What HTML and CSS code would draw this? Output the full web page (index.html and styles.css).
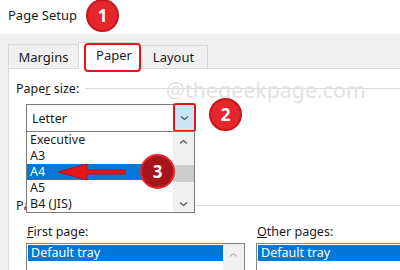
FILE: index.html
```html
<!DOCTYPE html>
<html lang="en">

<head>
  <meta charset="UTF-8">
  <title>Page Setup</title>
  <link rel="stylesheet" href="styles.css">
</head>

<body>
  <div class="window">
    <div class="titlebar">Page Setup</div>
    <div class="dialog">
      <div class="tabs">
        <div class="tab tab-margins">Margins</div>
        <div class="tab tab-paper active">Paper</div>
        <div class="tab tab-layout">Layout</div>
      </div>
      <div class="panel">
        <div class="legend">
          <span>Pape<u>r</u> size:</span>
          <div class="rule"></div>
        </div>
        <div class="combo">
          <div class="combo-value">Letter</div>
          <div class="combo-btn">
            <svg width="9" height="6" viewBox="0 0 9 6"><path d="M1 1.5 L4.5 4.5 L8 1.5" fill="none" stroke="#555" stroke-width="1.3"/></svg>
          </div>
          <div class="dropdown">
            <div class="items">
              <div class="item">Executive</div>
              <div class="item">A3</div>
              <div class="item selected">A4</div>
              <div class="item">A5</div>
              <div class="item">B4 (JIS)</div>
            </div>
            <div class="scroll">
              <svg width="9" height="6" viewBox="0 0 9 6"><path d="M1 4.5 L4.5 1.5 L8 4.5" fill="none" stroke="#555" stroke-width="1.3"/></svg>
              <div class="thumb"></div>
              <svg width="9" height="6" viewBox="0 0 9 6"><path d="M1 1.5 L4.5 4.5 L8 1.5" fill="none" stroke="#555" stroke-width="1.3"/></svg>
            </div>
          </div>
        </div>
        <div class="legend source">
          <span>Paper source</span>
          <div class="rule"></div>
        </div>
        <div class="trays">
          <div class="tray">
            <div class="tray-label"><u>F</u>irst page:</div>
            <div class="listbox">
              <div class="list-rows">
                <div class="item selected">Default tray</div>
              </div>
              <div class="scroll small">
                <svg width="9" height="6" viewBox="0 0 9 6"><path d="M1 4.5 L4.5 1.5 L8 4.5" fill="none" stroke="#bbb" stroke-width="1.3"/></svg>
              </div>
            </div>
          </div>
          <div class="tray">
            <div class="tray-label"><u>O</u>ther pages:</div>
            <div class="listbox">
              <div class="list-rows">
                <div class="item selected">Default tray</div>
              </div>
            </div>
          </div>
        </div>
      </div>
    </div>

    <!-- annotations -->
    <div class="watermark">@thegeekpage.com</div>
    <div class="mark-tab"></div>
    <div class="badge badge-1">1</div>
    <div class="badge badge-2">2</div>
    <div class="badge badge-3">3</div>
    <svg class="arrow" width="72" height="20" viewBox="0 0 72 20">
      <path d="M1 10 L30 2 L30 8 L68 8 L68 12 L30 12 L30 18 Z" fill="#e8141c" stroke="#b80f15" stroke-width="1"/>
    </svg>
  </div>
</body>

</html>
```

FILE: styles.css
```css
* {
  margin: 0;
  padding: 0;
  box-sizing: border-box;
}

body {
  font-family: "Noto Sans", "Liberation Sans", sans-serif;
  font-size: 12px;
  color: #1a1a1a;
  background: #fff;
}

.window {
  position: relative;
  width: 400px;
  height: 270px;
  overflow: hidden;
  display: flex;
  flex-direction: column;
}

.titlebar {
  flex-shrink: 0;
  height: 34px;
  padding: 6px 0 0 8px;
  font-size: 13px;
  background: #fff;
}

.dialog {
  flex: 1;
  min-height: 0;
  display: flex;
  flex-direction: column;
  background: #f0f0f0;
  padding-left: 8px;
}

.tabs {
  flex-shrink: 0;
  height: 34px;
  display: flex;
  align-items: flex-end;
}

.tab {
  flex-shrink: 0;
  display: flex;
  align-items: center;
  justify-content: center;
  font-size: 13px;
  border: 1px solid #d9d9d9;
  border-bottom: none;
  background: #f0f0f0;
}

.tab-margins {
  width: 70px;
  height: 24px;
  border-right: none;
}

.tab-paper {
  width: 62px;
  height: 27px;
  margin-bottom: -1px;
  background: #fff;
  position: relative;
  z-index: 1;
  padding: 0 0 3px 10px;
}

.tab-layout {
  width: 68px;
  height: 23px;
  border-left: none;
}

.panel {
  flex: 1 0 auto;
  background: #fff;
  border-top: 1px solid #d9d9d9;
  border-left: 1px solid #d9d9d9;
  padding: 11px 0 0 7px;
}

.legend {
  display: flex;
  align-items: center;
  gap: 6px;
  height: 16px;
  font-size: 12.5px;
}

.legend .rule {
  flex: 1;
  height: 1px;
  background: #dcdcdc;
}

.combo {
  position: relative;
  margin: 8px 0 0 10px;
  width: 169px;
  height: 28px;
  display: flex;
  align-items: center;
  border: 1px solid #7a7a7a;
  border-bottom: none;
  background: #fff;
}

.combo-value {
  flex: 1;
  padding-left: 5px;
  font-size: 12.5px;
}

.combo-btn {
  width: 23px;
  height: 29px;
  margin-top: -2px;
  margin-right: -2px;
  display: flex;
  align-items: center;
  justify-content: center;
  background: #cce4f7;
  border: 2px solid #e8141c;
  border-radius: 3px;
}

.dropdown {
  position: absolute;
  top: 26px;
  left: -1px;
  width: 169px;
  height: 82px;
  display: flex;
  border: 1px solid #7a7a7a;
  background: #fff;
  z-index: 2;
  overflow: hidden;
}

.items {
  flex: 1;
}

.item {
  height: 16px;
  line-height: 16px;
  padding-left: 3px;
  font-size: 12.5px;
}

.item.selected {
  background: #0078d7;
  color: #fff;
}

.scroll {
  width: 21px;
  background: #f0f0f0;
  display: flex;
  flex-direction: column;
  align-items: center;
  justify-content: space-between;
  padding: 7px 0 5px;
}

.scroll .thumb {
  width: 21px;
  height: 17px;
  background: #cdcdcd;
}

.legend.source {
  margin-top: 65px;
}

.trays {
  display: flex;
  gap: 11px;
  margin-top: 11px;
  margin-left: 10px;
}

.tray {
  width: 219px;
  flex-shrink: 0;
}

.tray-label {
  height: 16px;
  line-height: 16px;
  padding-left: 1px;
  font-size: 12.5px;
}

.listbox {
  margin-top: 3px;
  height: 40px;
  display: flex;
  border: 1px solid #828282;
  padding: 1px;
}

.list-rows {
  flex: 1;
}

.scroll.small {
  width: 21px;
  margin: -1px -1px 0 0;
  justify-content: flex-start;
  padding-top: 8px;
}

.watermark {
  position: absolute;
  left: 166px;
  top: 76px;
  font-size: 21px;
  color: #e2e2e2;
  letter-spacing: 0.2px;
}

.mark-tab {
  position: absolute;
  left: 84px;
  top: 43px;
  width: 57px;
  height: 29px;
  border: 2px solid #e8141c;
  border-radius: 4px;
  z-index: 3;
}

.badge {
  position: absolute;
  width: 33px;
  height: 33px;
  border-radius: 50%;
  background: #e5262c;
  border: 2px solid #c8161d;
  color: #fff;
  font-size: 17px;
  font-weight: 700;
  display: flex;
  align-items: center;
  justify-content: center;
  z-index: 4;
}

.badge-1 {
  left: 86px;
  top: -1px;
}

.badge-2 {
  left: 209px;
  top: 98px;
}

.badge-3 {
  left: 140px;
  top: 154px;
  width: 35px;
  height: 35px;
  background: #a8141c;
  border-color: #e5262c;
}

.arrow {
  position: absolute;
  left: 57px;
  top: 162px;
  z-index: 4;
}
```
